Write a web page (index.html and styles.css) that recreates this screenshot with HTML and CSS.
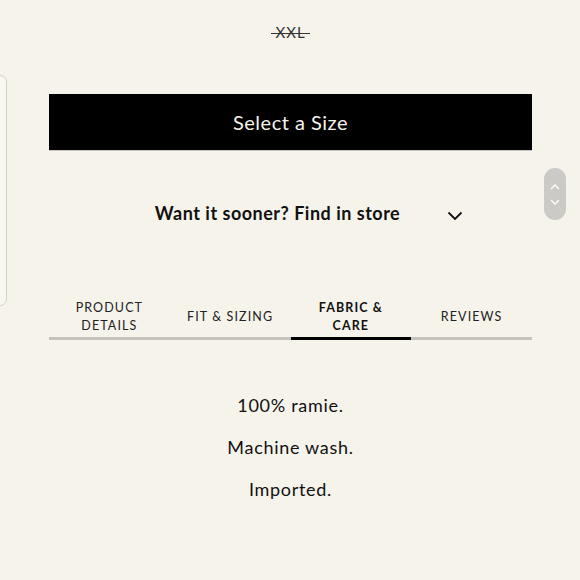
FILE: index.html
```html
<!DOCTYPE html>
<html lang="en">
<head>
    <meta charset="UTF-8">
    <meta name="viewport" content="width=device-width, initial-scale=1.0">
    <title>Fabric &amp; Care</title>
    <link rel="stylesheet" href="styles.css">
</head>
<body>
    <div class="side-panel"></div>

    <div class="page">
        <div class="sizes">
            <span class="size sold-out">XXL</span>
        </div>

        <button class="select-size">Select a Size</button>

        <div class="store-row">
            <span class="store-label">Want it sooner? Find in store</span>
            <svg class="chevron" width="16" height="10" viewBox="0 0 16 10">
                <path d="M1.5 1.5 L8 8 L14.5 1.5" fill="none" stroke="#111" stroke-width="1.8"/>
            </svg>
        </div>

        <div class="tabs">
            <div class="tab">Product<br>Details</div>
            <div class="tab">Fit &amp; Sizing</div>
            <div class="tab active">Fabric &amp;<br>Care</div>
            <div class="tab">Reviews</div>
        </div>

        <div class="care">
            <p>100% ramie.</p>
            <p>Machine wash.</p>
            <p>Imported.</p>
        </div>
    </div>

    <div class="scroller">
        <svg width="10" height="6" viewBox="0 0 10 6"><path d="M1 5 L5 1 L9 5" fill="none" stroke="#fff" stroke-width="1.3"/></svg>
        <svg width="10" height="6" viewBox="0 0 10 6"><path d="M1 1 L5 5 L9 1" fill="none" stroke="#fff" stroke-width="1.3"/></svg>
    </div>
</body>
</html>
```

FILE: styles.css
```css
body {
    font-family: Lato, "Noto Sans", sans-serif;
    margin: 0;
    padding: 0;
    background-color: #f6f3eb;
    color: #111;
    height: 580px;
    overflow: hidden;
}

.page {
    width: 483px;
    margin-left: 49px;
}

.sizes {
    padding-top: 22px;
    height: 20px;
    text-align: center;
}

.size {
    font-size: 15px;
    line-height: 20px;
    color: #333;
}

.sold-out {
    position: relative;
    letter-spacing: 1px;
}

.sold-out::after {
    content: "";
    position: absolute;
    left: -4px;
    right: -4px;
    top: 10px;
    border-top: 1px solid #333;
}

.select-size {
    display: block;
    width: 100%;
    height: 56px;
    margin-top: 52px;
    background-color: #000;
    color: #f6f3eb;
    border: none;
    box-shadow: 0 1px 0 #c9c6bf;
    font-family: inherit;
    font-size: 20px;
    letter-spacing: 0.5px;
    cursor: pointer;
}

.store-row {
    display: flex;
    align-items: center;
    justify-content: center;
    gap: 47px;
    margin-top: 51px;
    height: 24px;
    padding-left: 37px;
}

.store-label {
    font-size: 18px;
    font-weight: bold;
    line-height: 24px;
    letter-spacing: 0.5px;
}

.chevron {
    margin-top: 6px;
}

.tabs {
    display: grid;
    grid-template-columns: repeat(4, 1fr);
    margin-top: 72px;
    border-bottom: 3px solid #c6c3bc;
}

.tab {
    display: flex;
    align-items: center;
    justify-content: center;
    height: 40px;
    margin-bottom: -3px;
    border-bottom: 3px solid transparent;
    font-size: 12.5px;
    line-height: 18px;
    letter-spacing: 1.1px;
    text-transform: uppercase;
    text-align: center;
    color: #222;
}

.tab.active {
    font-weight: bold;
    border-bottom-color: #000;
    color: #111;
}

.care {
    padding-top: 44px;
    text-align: center;
}

.care p {
    margin: 0;
    font-size: 18px;
    line-height: 42px;
    letter-spacing: 0.7px;
}

.side-panel {
    position: absolute;
    left: -10px;
    top: 75px;
    width: 15px;
    height: 229px;
    border: 1px solid #d3d0c9;
    border-radius: 7px;
    background-color: #f9f7f2;
}

.scroller {
    position: absolute;
    left: 544px;
    top: 168px;
    width: 22px;
    height: 52px;
    border-radius: 11px;
    background-color: #cbcac7;
    display: flex;
    flex-direction: column;
    align-items: center;
    justify-content: center;
    gap: 9px;
}

.scroller svg {
    display: block;
}
```
